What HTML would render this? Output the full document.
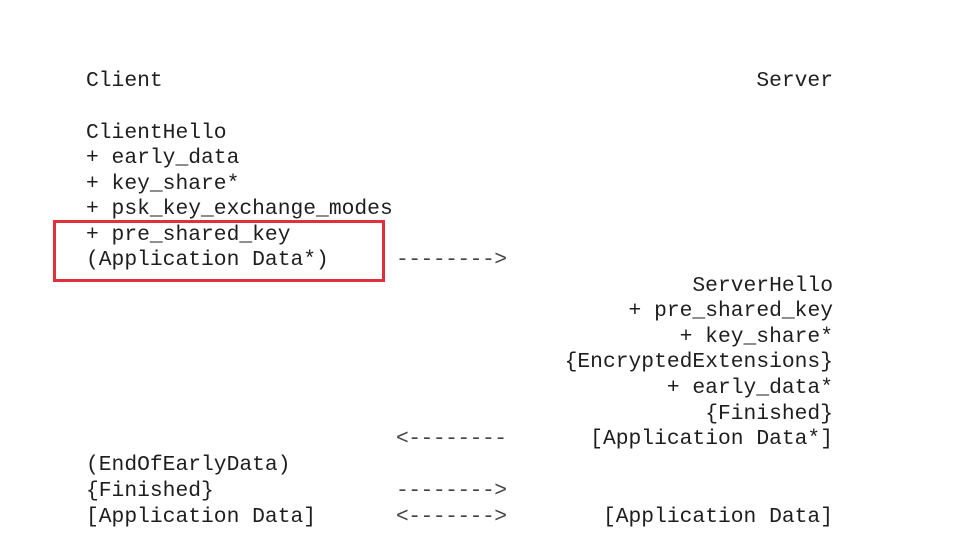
<!DOCTYPE html>
<html><head><meta charset="utf-8"><style>
html,body{margin:0;padding:0;background:#fff;width:964px;height:540px;overflow:hidden}
.t{position:absolute;font-family:"Liberation Mono",monospace;font-size:21.3px;line-height:26px;color:#1e1e1e;white-space:pre}
.l{left:86px}
.r{right:131px;text-align:right}
.a{left:396px;letter-spacing:-0.5px;color:#444}
.box{position:absolute;left:53px;top:220px;width:326px;height:56px;border:3px solid #e0303c}
</style></head><body>
<div class="t l" style="top:68px">Client</div>
<div class="t r" style="top:68px">Server</div>
<div class="t l" style="top:120px">ClientHello</div>
<div class="t l" style="top:145px">+ early_data</div>
<div class="t l" style="top:171px">+ key_share*</div>
<div class="t l" style="top:196px">+ psk_key_exchange_modes</div>
<div class="t l" style="top:222px">+ pre_shared_key</div>
<div class="t l" style="top:247px">(Application Data*)</div>
<div class="t a" style="top:247px">--------&gt;</div>
<div class="box"></div>
<div class="t r" style="top:273px">ServerHello</div>
<div class="t r" style="top:298px">+ pre_shared_key</div>
<div class="t r" style="top:324px">+ key_share*</div>
<div class="t r" style="top:349px">{EncryptedExtensions}</div>
<div class="t r" style="top:375px">+ early_data*</div>
<div class="t r" style="top:401px">{Finished}</div>
<div class="t r" style="top:426px">[Application Data*]</div>
<div class="t a" style="top:426px">&lt;--------</div>
<div class="t l" style="top:452px">(EndOfEarlyData)</div>
<div class="t l" style="top:478px">{Finished}</div>
<div class="t a" style="top:478px">--------&gt;</div>
<div class="t l" style="top:504px">[Application Data]</div>
<div class="t a" style="top:504px">&lt;-------&gt;</div>
<div class="t r" style="top:504px">[Application Data]</div>
</body></html>
